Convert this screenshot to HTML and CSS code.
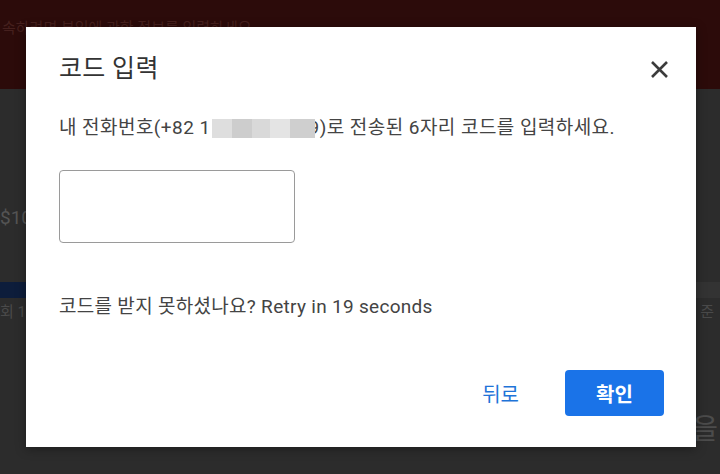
FILE: index.html
```html
<!DOCTYPE html>
<html lang="ko">
<head>
    <meta charset="UTF-8">
    <meta name="viewport" content="width=device-width, initial-scale=1.0">
    <title>코드 입력</title>
    <link rel="stylesheet" href="styles.css">
</head>
<body>
    <!-- Page behind the dialog -->
    <div class="page">
        <div class="page-header">
            <p class="header-note">속하려면 본인에 관한 정보를 입력하세요.</p>
        </div>
        <div class="page-body">
            <div class="price">$10</div>
            <div class="progress-row">
                <div class="progress-fill"></div>
            </div>
            <div class="info-row">
                <span>회 1</span>
                <span>준</span>
            </div>
            <div class="big-row">
                <span>을</span>
            </div>
        </div>
    </div>

    <!-- Verification dialog -->
    <div class="dialog">
        <div class="dialog-head">
            <h1 class="dialog-title">코드 입력</h1>
            <button class="close-btn" aria-label="닫기">
                <svg width="19" height="19" viewBox="0 0 19 19">
                    <path d="M2 2 L17 17 M17 2 L2 17" stroke="#3c3c3c" stroke-width="2.6" stroke-linecap="butt"/>
                </svg>
            </button>
        </div>
        <p class="dialog-text">내 전화번호(+82 1<span class="masked"></span><span class="tail">9</span>)로 전송된 6자리 코드를 입력하세요.</p>
        <input type="text" class="code-input">
        <p class="retry">코드를 받지 못하셨나요? Retry in 19 seconds</p>
        <div class="dialog-actions">
            <button class="btn-back">뒤로</button>
            <button class="btn-ok">확인</button>
        </div>
    </div>
</body>
</html>
```

FILE: styles.css
```css
body {
    margin: 0;
    font-family: Roboto, "Noto Sans CJK KR", sans-serif;
    background-color: #2b2b2b;
    width: 720px;
    height: 474px;
    overflow: hidden;
    position: relative;
}

/* background page */
.page {
    display: flex;
    flex-direction: column;
    height: 100%;
}

.page-header {
    height: 89px;
    background-color: #2c0b0a;
    box-sizing: border-box;
    padding: 18px 0 0 2px;
}

.header-note {
    margin: 0;
    font-size: 15px;
    line-height: 20px;
    color: #46201e;
}

.page-body {
    flex: 1;
    display: flex;
    flex-direction: column;
    background-color: #2c2c2c;
}

.price {
    margin-top: 116px;
    margin-left: 0;
    font-size: 19px;
    line-height: 26px;
    color: #545454;
}

.progress-row {
    margin-top: 51px;
    height: 16px;
    background-color: #333333;
}

.progress-fill {
    width: 40px;
    height: 100%;
    background-color: #0d1d3b;
}

.info-row {
    display: flex;
    justify-content: space-between;
    padding: 4px 6px 0 0;
    font-size: 15px;
    line-height: 20px;
    color: #4a4a4a;
}

.big-row {
    display: flex;
    justify-content: flex-end;
    margin-top: 92px;
    padding-right: 2px;
    font-size: 28px;
    line-height: 32px;
    color: #4c4c4c;
}

/* dialog */
.dialog {
    position: absolute;
    left: 26px;
    top: 27px;
    width: 670px;
    height: 420px;
    box-sizing: border-box;
    padding: 28px 27px 0 33px;
    background-color: #fff;
    box-shadow: 0 2px 10px rgba(0, 0, 0, 0.35);
    display: flex;
    flex-direction: column;
    align-items: flex-start;
}

.dialog-head {
    align-self: stretch;
    display: flex;
    justify-content: space-between;
    align-items: center;
    height: 28px;
}

.dialog-title {
    margin: 0;
    font-size: 25px;
    font-weight: 400;
    line-height: 28px;
    letter-spacing: 0.3px;
    color: #333;
}

.close-btn {
    border: none;
    background: none;
    padding: 0;
    display: flex;
    cursor: pointer;
}

.dialog-text {
    margin: 33px 0 0 0;
    font-size: 19px;
    line-height: 24px;
    letter-spacing: 0.45px;
    color: #444;
}

.masked {
    display: inline-block;
    position: relative;
    z-index: 1;
    vertical-align: -4px;
    width: 103px;
    height: 19px;
    margin-left: 1px;
    background: linear-gradient(to right,
        #dedede 0 20px, #cdcdcd 20px 40px, #d9d9d9 40px 58px,
        #e4e4e4 58px 78px, #cfcfcf 78px 103px);
}

.tail {
    margin-left: -6px;
}

.code-input {
    margin-top: 30px;
    width: 236px;
    height: 73px;
    box-sizing: border-box;
    border: 1px solid #9a9a9a;
    border-radius: 4px;
    outline: none;
    font-size: 18px;
}

.retry {
    margin: 52px 0 0 0;
    font-size: 19px;
    line-height: 24px;
    letter-spacing: 0.3px;
    color: #444;
}

.dialog-actions {
    align-self: stretch;
    display: flex;
    justify-content: flex-end;
    align-items: center;
    gap: 34px;
    margin-top: 51px;
    padding-right: 5px;
}

.btn-back {
    border: none;
    background: none;
    padding: 0 12px;
    height: 46px;
    font-family: inherit;
    font-size: 20px;
    color: #1f74d8;
    cursor: pointer;
}

.btn-ok {
    border: none;
    width: 99px;
    height: 46px;
    border-radius: 4px;
    background-color: #1a73e8;
    font-family: inherit;
    font-size: 20px;
    font-weight: 700;
    color: #fff;
    cursor: pointer;
}
```
